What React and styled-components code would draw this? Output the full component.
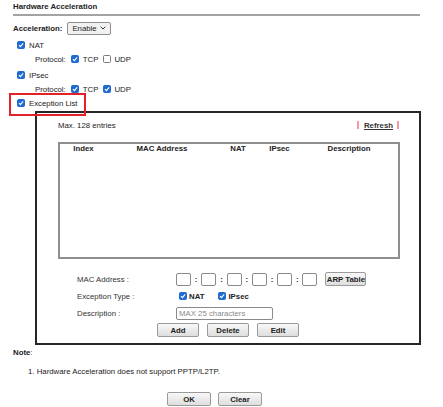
import React from "react";
import styled, { createGlobalStyle } from "styled-components";

const Global = createGlobalStyle`
  html, body { margin: 0; padding: 0; background: #fff; }
  body {
    font-family: "Liberation Sans", Arial, sans-serif;
    font-size: 7.8px;
    color: #222;
  }
  * { box-sizing: border-box; }
`;

const Page = styled.div`
  width: 421px;
  padding-left: 13px;
`;

const Title = styled.div`
  width: 407px;
  height: 16px;
  line-height: 14px;
  font-weight: bold;
  border-bottom: 2px solid #a3a3a3;
`;

const Row = styled.div`
  position: relative;
  display: flex;
  align-items: center;
  height: 14px;
  gap: ${(p) => p.$gap ?? 4}px;
  margin-top: ${(p) => p.$mt || 0}px;
  padding-left: ${(p) => p.$indent || 0}px;
`;

const Bold = styled.span`
  font-weight: bold;
`;

const FakeSelect = styled.div`
  display: flex;
  align-items: center;
  justify-content: space-between;
  width: 44px;
  height: 13px;
  padding: 0 4px 0 4px;
  border: 1px solid #8f8f8f;
  border-radius: 2px;
  background: #f1f1f1;
  color: #222;
`;

const BoxMark = styled.span`
  display: inline-flex;
  align-items: center;
  justify-content: center;
  flex: none;
  width: 8px;
  height: 8px;
  border-radius: 1.5px;
  background: ${(p) => (p.$on ? "#1f6bd0" : "#fff")};
  border: 1px solid ${(p) => (p.$on ? "#1f6bd0" : "#7a7a7a")};
`;

const Option = styled.span`
  display: inline-flex;
  align-items: center;
  gap: ${(p) => p.$gap ?? 4}px;
  margin-left: ${(p) => p.$ml || 0}px;
  font-weight: ${(p) => (p.$bold ? "bold" : "normal")};
`;

const Highlight = styled.span`
  position: absolute;
  left: -4px;
  top: -3px;
  width: 77px;
  height: 23px;
  border: 2px solid #e32128;
  pointer-events: none;
`;

const Panel = styled.div`
  margin-top: 1px;
  margin-left: 22px;
  width: 386px;
  border: 2px solid #262626;
  padding: 5px 19px 6px 21px;
`;

const TopLine = styled.div`
  display: flex;
  align-items: center;
  justify-content: space-between;
  height: 14px;
`;

const RefreshGroup = styled.div`
  display: flex;
  align-items: center;
  gap: 5px;
  padding-right: 1px;
`;

const Bar = styled.span`
  width: 2px;
  height: 8px;
  background: #f19aa4;
`;

const RefreshLink = styled.a`
  font-weight: bold;
  color: #333;
  text-decoration: underline;
  margin-right: -1px;
`;

const ListTable = styled.div`
  margin-top: 10px;
  height: 117px;
  border: 2px solid #8e8e8e;
`;

const HeadRow = styled.div`
  display: grid;
  grid-template-columns: 47px 110px 42px 41px 1fr;
  height: 9px;
  line-height: 9px;
  font-weight: bold;
  color: #222;
`;

const HeadCell = styled.div`
  text-align: center;
`;

const Form = styled.div`
  display: flex;
  flex-direction: column;
  gap: 3px;
  margin-top: 13px;
`;

const FormRow = styled.div`
  display: flex;
  align-items: center;
  height: 14px;
  padding-left: 19px;
`;

const Label = styled.div`
  width: 99px;
  flex: none;
  color: #333;
`;

const Octet = styled.span`
  display: inline-block;
  width: 15px;
  height: 13px;
  border: 1px solid #8a8a8a;
  border-radius: 2px;
  background: #fff;
`;

const Colon = styled.span`
  width: 10.3px;
  text-align: center;
  font-weight: bold;
`;

const Button = styled.button`
  font-family: "Liberation Sans", Arial, sans-serif;
  font-size: 7.8px;
  font-weight: bold;
  color: #222;
  width: ${(p) => p.$w}px;
  height: ${(p) => p.$h || 14}px;
  margin-left: ${(p) => p.$ml || 0}px;
  padding: 0;
  border: 1px solid #9a9a9a;
  border-radius: 2px;
  background: linear-gradient(#f8f8f8, #dedede);
`;

const TextInput = styled.input`
  width: 97px;
  height: 13px;
  padding: 0 2px;
  border: 1px solid #8a8a8a;
  border-radius: 2px;
  font-family: "Liberation Sans", Arial, sans-serif;
  font-size: 7.8px;
  &::placeholder { color: #8a8a8a; }
`;

const ButtonRow = styled.div`
  display: flex;
  justify-content: center;
  gap: ${(p) => p.$gap}px;
  margin-top: ${(p) => p.$mt}px;
  padding-right: ${(p) => p.$pr || 0}px;
`;

const NoteTitle = styled.div`
  height: 10px;
  line-height: 10px;
  margin-top: 3px;
`;

const NoteItem = styled.div`
  height: 10px;
  line-height: 10px;
  margin-top: 9px;
  padding-left: 15px;
  color: #222;
`;

const Footer = styled(ButtonRow)`
  width: 403px;
`;

function Check({ on }) {
  return (
    <BoxMark $on={on}>
      {on && (
        <svg width="6" height="6" viewBox="0 0 10 10">
          <path d="M1.6 5.3 L4 7.6 L8.6 2.4" fill="none" stroke="#fff" strokeWidth="1.9" />
        </svg>
      )}
    </BoxMark>
  );
}

function Chevron() {
  return (
    <svg width="6" height="4" viewBox="0 0 6 4">
      <path d="M0.7 0.8 L3 3 L5.3 0.8" fill="none" stroke="#333" strokeWidth="1" />
    </svg>
  );
}

const columns = ["Index", "MAC Address", "NAT", "IPsec", "Description"];

export default function App() {
  return (
    <>
      <Global />
      <Page>
        <Title>Hardware Acceleration</Title>

        <Row $mt={5} $gap={5}>
          <Bold>Acceleration:</Bold>
          <FakeSelect>
            <span>Enable</span>
            <Chevron />
          </FakeSelect>
        </Row>

        <Row $mt={3} $indent={4}>
          <Option><Check on />NAT</Option>
        </Row>
        <Row $indent={22} $gap={5}>
          <span>Protocol:</span>
          <Option><Check on />TCP</Option>
          <Option $gap={3}><Check />UDP</Option>
        </Row>

        <Row $mt={2} $indent={4}>
          <Option><Check on />IPsec</Option>
        </Row>
        <Row $indent={22} $gap={5}>
          <span>Protocol:</span>
          <Option><Check on />TCP</Option>
          <Option $gap={3}><Check on />UDP</Option>
        </Row>

        <Row $indent={4}>
          <Option><Check on />Exception List</Option>
          <Highlight />
        </Row>

        <Panel>
          <TopLine>
            <span>Max. 128 entries</span>
            <RefreshGroup>
              <Bar />
              <RefreshLink>Refresh</RefreshLink>
              <Bar />
            </RefreshGroup>
          </TopLine>

          <ListTable>
            <HeadRow>
              {columns.map((c) => (
                <HeadCell key={c}>{c}</HeadCell>
              ))}
            </HeadRow>
          </ListTable>

          <Form>
            <FormRow>
              <Label>MAC Address :</Label>
              {[0, 1, 2, 3, 4, 5].map((i) => (
                <React.Fragment key={i}>
                  <Octet />
                  {i < 5 && <Colon>:</Colon>}
                </React.Fragment>
              ))}
              <Button $w={41} $ml={8}>ARP Table</Button>
            </FormRow>
            <FormRow>
              <Label>Exception Type :</Label>
              <Option $gap={2} $ml={3} $bold><Check on />NAT</Option>
              <Option $gap={2} $ml={14} $bold><Check on />IPsec</Option>
            </FormRow>
            <FormRow>
              <Label>Description :</Label>
              <TextInput placeholder="MAX 25 characters" />
            </FormRow>
          </Form>

          <ButtonRow $gap={8} $mt={3} $pr={2}>
            <Button $w={42}>Add</Button>
            <Button $w={42}>Delete</Button>
            <Button $w={42}>Edit</Button>
          </ButtonRow>
        </Panel>

        <NoteTitle><Bold>Note</Bold>:</NoteTitle>
        <NoteItem>1. Hardware Acceleration does not support PPTP/L2TP.</NoteItem>

        <Footer $gap={7} $mt={15}>
          <Button $w={44} $h={14}>OK</Button>
          <Button $w={44} $h={14}>Clear</Button>
        </Footer>
      </Page>
    </>
  );
}
